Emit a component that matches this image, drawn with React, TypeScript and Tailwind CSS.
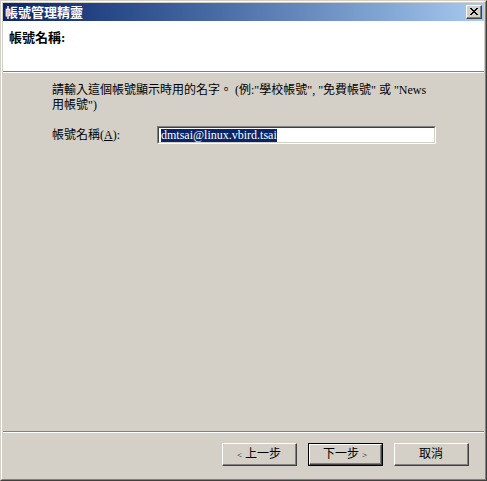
import React from 'react';

const ui = "font-['Liberation_Serif','Noto_Sans_CJK_TC',serif]";

const WinButton: React.FC<{ label: React.ReactNode; isDefault?: boolean }> = ({ label, isDefault }) => {
  const face = (
    <div className="h-full w-full border border-t-white border-l-white border-r-[#404040] border-b-[#404040]">
      <div className="flex h-full w-full items-center justify-center border-r border-b border-r-[#808080] border-b-[#808080] text-[12px] text-black">
        {label}
      </div>
    </div>
  );
  if (isDefault) {
    return <div className="h-[23px] w-[75px] border border-black">{face}</div>;
  }
  return <div className="h-[23px] w-[75px]">{face}</div>;
};

export default function App() {
  return (
    <div className={`h-[481px] w-[487px] border border-t-[#d4d0c8] border-l-[#d4d0c8] border-r-[#404040] border-b-[#404040] bg-[#d4d0c8] ${ui}`}>
      <div className="h-full w-full border border-t-white border-l-white border-r-[#808080] border-b-[#808080] p-px">
        <div className="flex h-full w-full flex-col">
          {/* Title bar */}
          <div className="flex h-[18px] items-center justify-between bg-gradient-to-r from-[#0a246a] to-[#a6caf0] pl-[2px] pr-[2px]">
            <span className="text-[13px] font-bold leading-none text-white">帳號管理精靈</span>
            <div className="h-[14px] w-[16px] border border-t-white border-l-white border-r-[#404040] border-b-[#404040] bg-[#d4d0c8]">
              <div className="flex h-full w-full items-center justify-center border-r border-b border-r-[#808080] border-b-[#808080]">
                <svg width="8" height="7" viewBox="0 0 8 7" shapeRendering="crispEdges">
                  <path
                    d="M0 0h2v1h-2zM6 0h2v1h-2zM1 1h2v1h-2zM5 1h2v1h-2zM2 2h4v1h-4zM3 3h2v1h-2zM2 4h4v1h-4zM1 5h2v1h-2zM5 5h2v1h-2zM0 6h2v1h-2zM6 6h2v1h-2z"
                    fill="#000"
                  />
                </svg>
              </div>
            </div>
          </div>

          {/* Header */}
          <div className="h-[52px] border-b border-b-white">
            <div className="h-[51px] border-b border-b-[#808080] bg-white pl-[6px] pt-[9px]">
              <div className="text-[13px] font-bold leading-[15px] text-black">帳號名稱:</div>
            </div>
          </div>

          {/* Body */}
          <div className="flex flex-1 flex-col pl-[49px] pt-[10px] text-[12px] text-black">
            <p className="leading-[15px]">
              請輸入這個帳號顯示時用的名字。 (例:"學校帳號", "免費帳號" 或 "News
              <br />
              用帳號")
            </p>
            <div className="mt-[13px] flex items-center">
              <span className="w-[105px] leading-[14px]">
                帳號名稱(<span className="underline">A</span>):
              </span>
              <div className="h-[18px] w-[279px] border border-t-[#808080] border-l-[#808080] border-r-white border-b-white">
                <div className="flex h-full w-full items-center border border-t-[#404040] border-l-[#404040] border-r-[#d4d0c8] border-b-[#d4d0c8] bg-white pl-[2px]">
                  <span className="bg-[#0a246a] text-[12px] leading-[13px] text-white">dmtsai@linux.vbird.tsai</span>
                </div>
              </div>
            </div>
          </div>

          {/* Separator */}
          <div className="border-t border-b border-t-[#808080] border-b-white" />

          {/* Buttons */}
          <div className="flex h-[45px] items-start justify-end gap-[11px] pr-[15px] pt-[10px]">
            <WinButton label={<span><span className="text-[9px]">&lt;</span> 上一步</span>} />
            <WinButton isDefault label={<span>下一步 <span className="text-[9px]">&gt;</span></span>} />
            <WinButton label="取消" />
          </div>
        </div>
      </div>
    </div>
  );
}
